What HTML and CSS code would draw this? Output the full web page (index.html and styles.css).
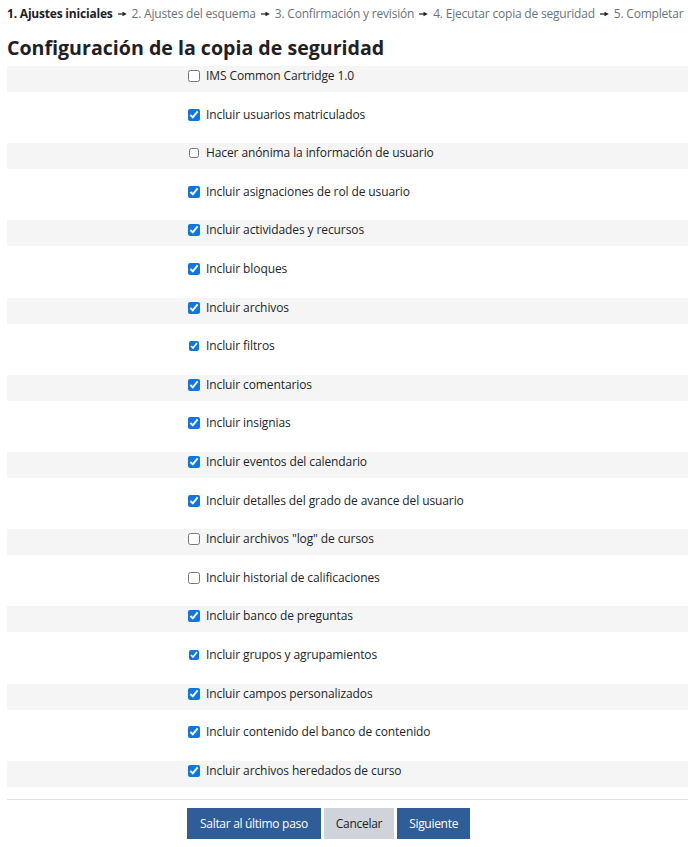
FILE: index.html
```html
<!DOCTYPE html>
<html>
  <head>
    <title>Configuración de la copia de seguridad</title>
    <meta charset="utf-8" />
    <link rel="stylesheet" href="styles.css">
  </head>
  <body>
    <div class="page">
      <div class="progress">
        <span class="step current">1. Ajustes iniciales</span>
        <svg class="sep" width="9" height="6" viewBox="0 0 9 6"><path d="M0 3h5" stroke="#1d2125" stroke-width="1.2"/><path d="M4.5 0.8L8.8 3L4.5 5.2z" fill="#1d2125"/></svg>
        <span class="step">2. Ajustes del esquema</span>
        <svg class="sep" width="9" height="6" viewBox="0 0 9 6"><path d="M0 3h5" stroke="#1d2125" stroke-width="1.2"/><path d="M4.5 0.8L8.8 3L4.5 5.2z" fill="#1d2125"/></svg>
        <span class="step">3. Confirmación y revisión</span>
        <svg class="sep" width="9" height="6" viewBox="0 0 9 6"><path d="M0 3h5" stroke="#1d2125" stroke-width="1.2"/><path d="M4.5 0.8L8.8 3L4.5 5.2z" fill="#1d2125"/></svg>
        <span class="step">4. Ejecutar copia de seguridad</span>
        <svg class="sep" width="9" height="6" viewBox="0 0 9 6"><path d="M0 3h5" stroke="#1d2125" stroke-width="1.2"/><path d="M4.5 0.8L8.8 3L4.5 5.2z" fill="#1d2125"/></svg>
        <span class="step">5. Completar</span>
      </div>

      <h2>Configuración de la copia de seguridad</h2>

      <form class="settings">
        <label class="row"><input type="checkbox" /> IMS Common Cartridge 1.0</label>
        <label class="row"><input type="checkbox" checked /> Incluir usuarios matriculados</label>
        <label class="row"><input type="checkbox" class="small" /> Hacer anónima la información de usuario</label>
        <label class="row"><input type="checkbox" checked /> Incluir asignaciones de rol de usuario</label>
        <label class="row"><input type="checkbox" checked /> Incluir actividades y recursos</label>
        <label class="row"><input type="checkbox" checked /> Incluir bloques</label>
        <label class="row"><input type="checkbox" checked /> Incluir archivos</label>
        <label class="row"><input type="checkbox" checked class="small" /> Incluir filtros</label>
        <label class="row"><input type="checkbox" checked /> Incluir comentarios</label>
        <label class="row"><input type="checkbox" checked /> Incluir insignias</label>
        <label class="row"><input type="checkbox" checked /> Incluir eventos del calendario</label>
        <label class="row"><input type="checkbox" checked /> Incluir detalles del grado de avance del usuario</label>
        <label class="row"><input type="checkbox" /> Incluir archivos "log" de cursos</label>
        <label class="row"><input type="checkbox" /> Incluir historial de calificaciones</label>
        <label class="row"><input type="checkbox" checked /> Incluir banco de preguntas</label>
        <label class="row"><input type="checkbox" checked class="small" /> Incluir grupos y agrupamientos</label>
        <label class="row"><input type="checkbox" checked /> Incluir campos personalizados</label>
        <label class="row"><input type="checkbox" checked /> Incluir contenido del banco de contenido</label>
        <label class="row"><input type="checkbox" checked /> Incluir archivos heredados de curso</label>

        <div class="actions">
          <button type="button" class="btn btn-primary wide">Saltar al último paso</button>
          <button type="button" class="btn btn-secondary">Cancelar</button>
          <button type="button" class="btn btn-primary">Siguiente</button>
        </div>
      </form>
    </div>
  </body>
</html>
```

FILE: styles.css
```css
* {
  box-sizing: border-box;
}
html,
body {
  margin: 0;
  font-family: "Open Sans", "Noto Sans", sans-serif;
  font-size: 13px;
  color: #1d2125;
  background: #fff;
}

.page {
  padding: 5px 0 0 7px;
  overflow: hidden;
}

.progress {
  display: flex;
  align-items: center;
  gap: 5px;
  white-space: nowrap;
  height: 17px;
  font-size: 12px;
  letter-spacing: -0.2px;
}
.step {
  color: #6a737b;
}
.step.current {
  color: #1d2125;
  font-weight: 700;
}
.sep {
  flex: none;
}

h2 {
  margin: 13px 0 0 0;
  font-size: 19.6px;
  line-height: 26px;
  font-weight: 700;
  letter-spacing: 0;
}

.settings {
  margin-top: 5px;
}

.row {
  display: flex;
  align-items: center;
  height: 26px;
  padding: 1px 0 7px 181px;
  margin-bottom: 12.6px;
  line-height: 18px;
  font-size: 12px;
  letter-spacing: -0.1px;
  color: #212529;
}
.row:nth-of-type(odd) {
  background: #f5f5f5;
}
.row input {
  width: 12px;
  height: 12px;
  margin: 0 6px 0 0;
  accent-color: #0f75e0;
}
.row input.small {
  width: 10px;
  height: 10px;
  margin: 0 7px 0 1px;
}

.actions {
  border-top: 1px solid #dee2e6;
  margin-top: 1px;
  padding: 8px 0 0 180px;
  display: flex;
  gap: 3px;
}
.btn {
  font-family: "Open Sans", "Noto Sans", sans-serif;
  font-size: 12px;
  height: 31px;
  padding: 0 12px;
  border: none;
  border-radius: 0;
  letter-spacing: -0.3px;
}
.btn.wide {
  padding: 0 13px;
}
.btn-primary {
  background: #2f5d98;
  color: #fff;
}
.btn-secondary {
  background: #ced4da;
  color: #1d2125;
}
```
